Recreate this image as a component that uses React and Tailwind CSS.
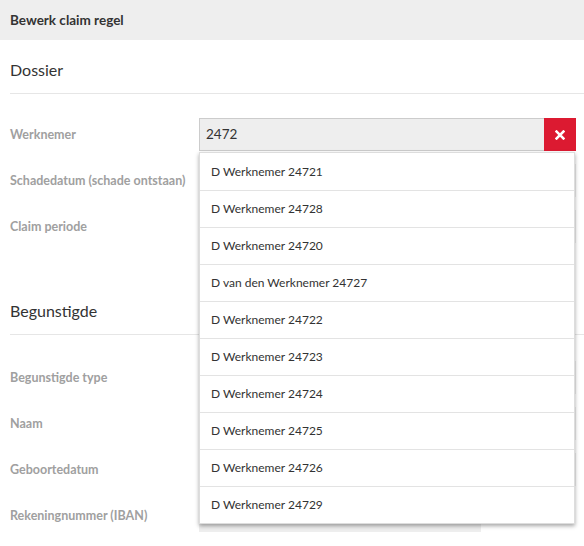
import React from 'react';

const items = [
  'D Werknemer 24721',
  'D Werknemer 24728',
  'D Werknemer 24720',
  'D van den Werknemer 24727',
  'D Werknemer 24722',
  'D Werknemer 24723',
  'D Werknemer 24724',
  'D Werknemer 24725',
  'D Werknemer 24726',
  'D Werknemer 24729',
];

const Row = ({ label, children, className = '' }) => (
  <div className={`flex items-center h-[33px] ${className}`}>
    <div className="w-[189px] shrink-0 pt-px text-[12.5px] font-bold text-[#a0a0a0]">{label}</div>
    <div className="flex-1">{children}</div>
  </div>
);

const Field = ({ w = 'w-full' }) => <div className={`${w} h-[33px] bg-[#eeeeee]`} />;

const Heading = ({ children, className = '' }) => (
  <div className={`flex items-end pb-[11px] border-b border-[#e6e6e6] text-[16px] text-[#333] ${className}`}>
    {children}
  </div>
);

export default function App() {
  return (
    <div className="w-[584px] h-[546px] overflow-hidden bg-white" style={{ fontFamily: 'Lato, sans-serif' }}>
      <div className="h-[40px] bg-[#eeeeee] flex items-center px-[10px] text-[13.5px] font-bold text-[#333]">
        Bewerk claim regel
      </div>

      <div className="pl-[10px]">
        <Heading className="h-[54px]">Dossier</Heading>
      </div>

      <div className="pl-[10px] pr-[8px]">
        <div className="flex flex-col gap-[13px] mt-[24px]">
          <Row label="Werknemer">
            <div className="relative">
              <div className="flex h-[33px] border border-[#cccccc] bg-[#eeeeee]">
                <div className="flex-1 flex items-center px-[6px] text-[13.5px] text-[#333]">2472</div>
                <button className="w-[32px] h-[33px] -my-px -mr-px bg-[#dc1a31] flex items-center justify-center">
                  <svg width="10" height="10" viewBox="0 0 10 10">
                    <path d="M1.6 1.6 L8.4 8.4 M8.4 1.6 L1.6 8.4" stroke="white" strokeWidth="2.6" strokeLinecap="square" />
                  </svg>
                </button>
              </div>
              <ul className="absolute z-10 left-0 top-[34px] w-[376px] bg-white border border-[#dddddd] shadow-[0_2px_4px_rgba(0,0,0,0.35)]">
                {items.map((it, i) => (
                  <li
                    key={i}
                    className={`h-[37px] flex items-center px-[11px] text-[12px] text-[#333] ${i > 0 ? 'border-t border-[#e3e3e3]' : ''}`}
                  >
                    {it}
                  </li>
                ))}
              </ul>
            </div>
          </Row>
          <Row label="Schadedatum (schade ontstaan)"><Field /></Row>
          <Row label="Claim periode"><Field /></Row>
        </div>
      </div>

      <div className="pl-[10px]">
        <Heading className="h-[92px]">Begunstigde</Heading>
      </div>

      <div className="pl-[10px] pr-[8px]">
        <div className="flex flex-col gap-[13px] mt-[26px]">
          <Row label="Begunstigde type"><Field /></Row>
          <Row label="Naam"><Field /></Row>
          <Row label="Geboortedatum"><Field /></Row>
          <Row label="Rekeningnummer (IBAN)"><Field w="w-[282px]" /></Row>
        </div>
      </div>
    </div>
  );
}
